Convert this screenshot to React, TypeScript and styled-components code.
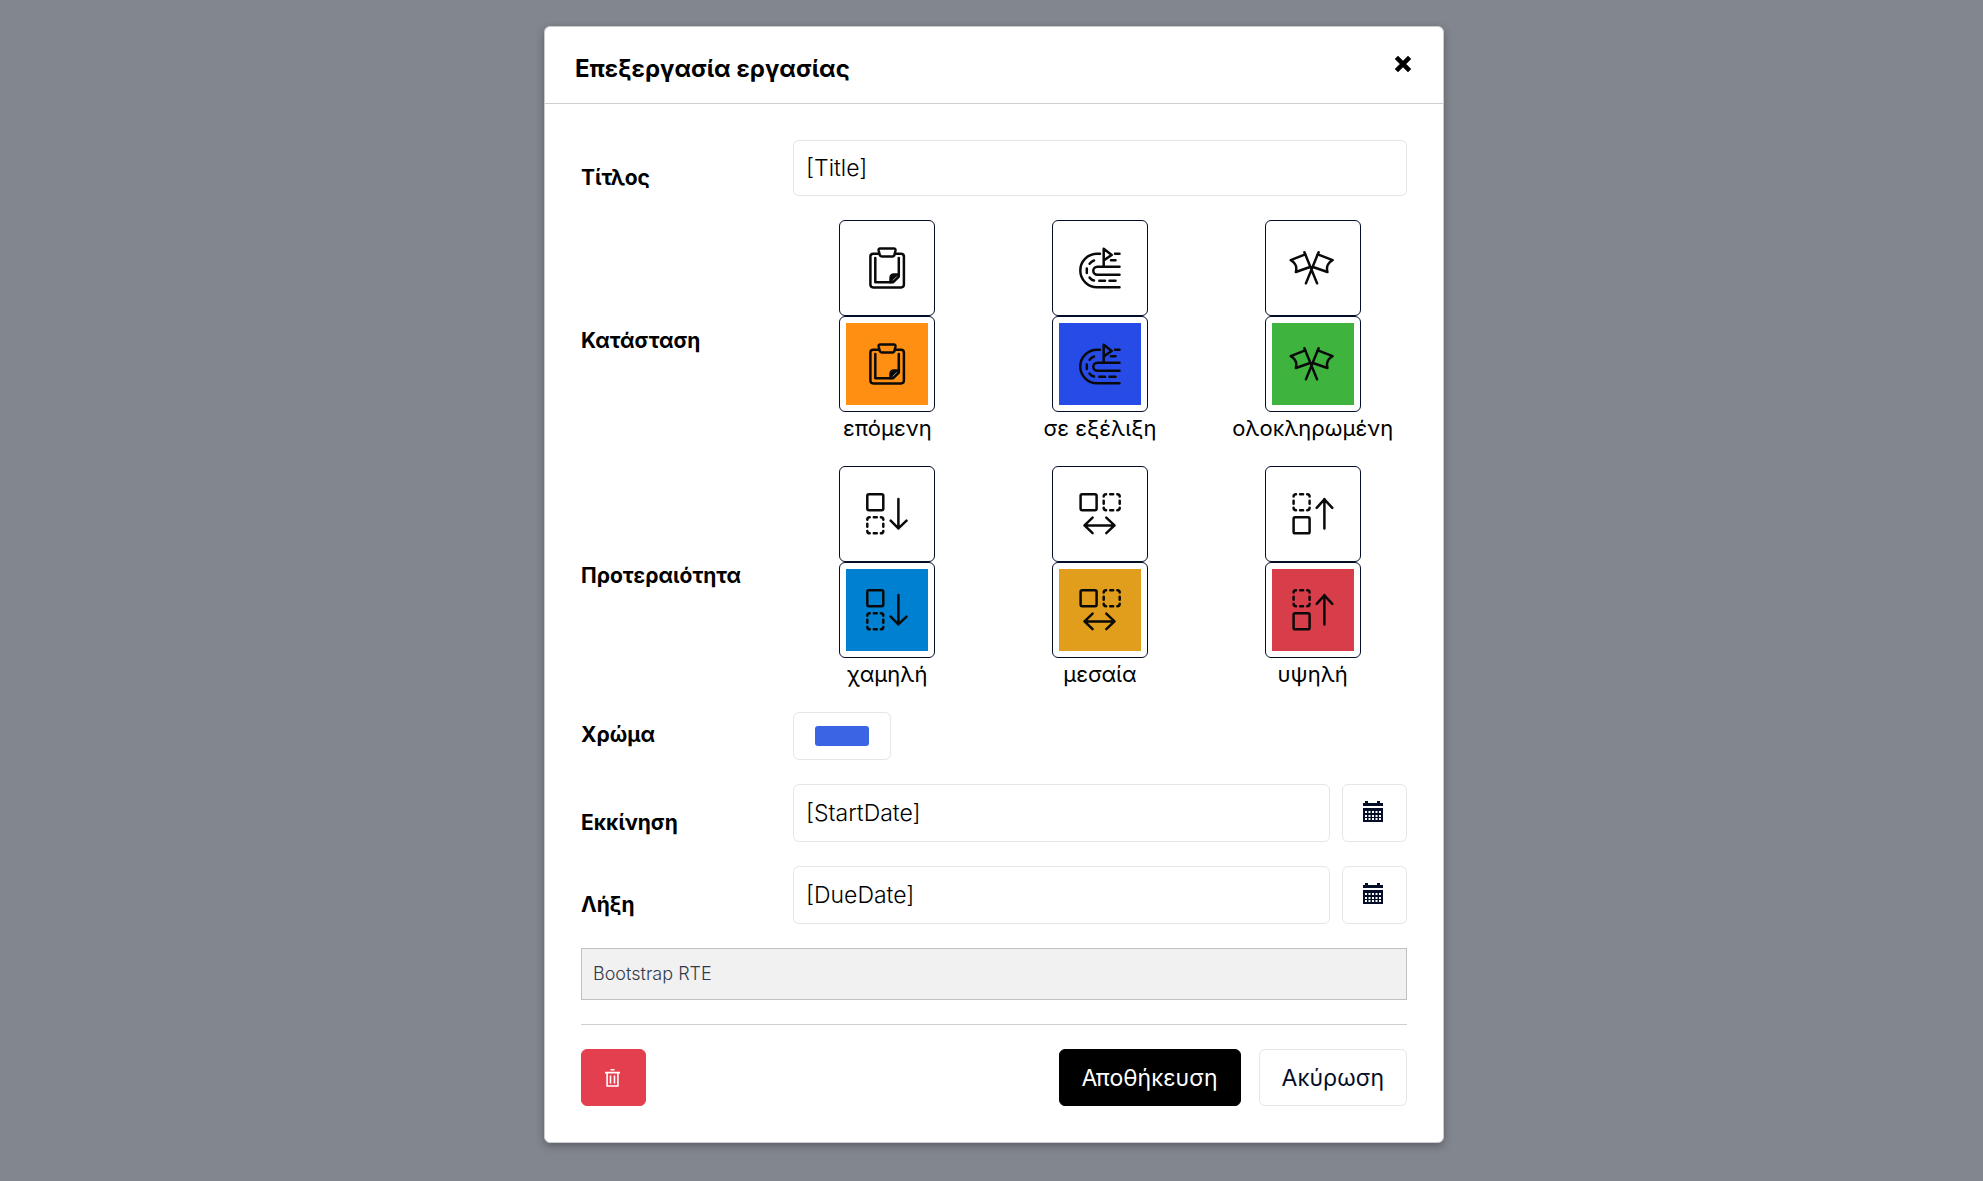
import React, { useState } from "react";
import styled, { createGlobalStyle, css } from "styled-components";

const GlobalStyle = createGlobalStyle`
  *, *::before, *::after { box-sizing: border-box; }
  body {
    margin: 0;
    background: #82868e;
    color: #000;
    font-family: Inter, "Noto Sans", sans-serif;
    font-size: 22px;
    line-height: 30px;
  }
  button, input { font: inherit; color: inherit; }
`;

const Backdrop = styled.div`
  display: flex;
  justify-content: center;
  align-items: flex-start;
  min-height: 100vh;
  padding: 26px 0 38px 5px;
`;

const Dialog = styled.form`
  width: 100%;
  max-width: 900px;
  background: #fff;
  border: 1px solid #c9cbcf;
  border-radius: 6px;
  box-shadow: 0 3px 8px rgba(0, 0, 0, 0.3);
`;

const Header = styled.header`
  display: flex;
  justify-content: space-between;
  align-items: flex-start;
  padding: 20px 23px 18px 30px;
  border-bottom: 1px solid #cdced1;
`;

const Heading = styled.h1`
  margin: 0;
  padding-top: 6px;
  font-size: 24px;
  line-height: 32px;
  font-weight: 700;
`;

const CloseButton = styled.button`
  display: flex;
  padding: 8px;
  border: 0;
  background: none;
  cursor: pointer;
`;

const Body = styled.div`
  display: flex;
  flex-direction: column;
  gap: 24px;
  padding: 36px;
`;

const Row = styled.div`
  display: grid;
  grid-template-columns: 212px 1fr;
  align-items: center;
  margin-right: -12px;
  margin-left: -12px;
`;

const labelText = css<{ $lowered?: boolean }>`
  padding: ${(p) => (p.$lowered ? "20px 12px 0" : "0 12px 2px")};
  font-size: 21px;
  line-height: 30px;
  font-weight: 700;
`;

const FieldLabel = styled.label<{ $lowered?: boolean }>`${labelText}`;
const GroupLabel = styled.span<{ $lowered?: boolean }>`${labelText}`;

const Field = styled.div`
  display: flex;
  gap: 12px;
  min-width: 0;
  padding: 0 12px;
`;

const TextInput = styled.input<{ $tall?: boolean }>`
  flex: 1;
  min-width: 0;
  height: ${(p) => (p.$tall ? "58px" : "56px")};
  padding: 0 12px;
  background: #fff;
  border: 1px solid #e6e6e6;
  border-radius: 6px;
  font-size: 23px;
  font-weight: 300;
`;

const ColorInput = styled.input`
  appearance: none;
  width: 98px;
  height: 48px;
  padding: 13px 21px;
  background: #fff;
  border: 1px solid #e6e6e6;
  border-radius: 6px;
  cursor: pointer;

  &::-webkit-color-swatch-wrapper { padding: 0; }
  &::-webkit-color-swatch { border: 0; border-radius: 3px; }
`;

const variants = {
  outline: css`background: #fff; border-color: #e6e6e6; color: #040e28;`,
  solid: css`background: #000; border-color: #000; color: #fff;`,
  danger: css`background: #e43f4f; border-color: #e43f4f; color: #fff;`,
};

const Button = styled.button<{ $variant: keyof typeof variants; $icon?: boolean }>`
  display: flex;
  align-items: center;
  justify-content: center;
  min-height: 57px;
  padding: 0 ${(p) => (p.$icon ? "20px" : "22px")};
  ${(p) => p.$icon && "width: 65px;"}
  border: 1px solid;
  border-radius: 6px;
  font-size: 23px;
  cursor: pointer;
  ${(p) => variants[p.$variant]}
`;

const Options = styled.div`
  display: grid;
  grid-template-columns: repeat(3, 1fr);
`;

const Option = styled.label`
  position: relative;
  display: flex;
  flex-direction: column;
  align-items: center;
  cursor: pointer;
`;

const HiddenRadio = styled.input`
  position: absolute;
  opacity: 0;
`;

const Tile = styled.span`
  display: block;
  width: 96px;
  height: 96px;
  padding: 6px;
  border: 1px solid #040e28;
  border-radius: 6px;
`;

const TileArt = styled.svg<{ $fill: string }>`
  display: block;
  background: ${(p) => p.$fill};
  fill: none;
  stroke: #0a0a0a;
  stroke-width: 2.5;
  stroke-linecap: round;
  stroke-linejoin: round;
`;

const Caption = styled.span`
  padding-top: 2px;
  line-height: 28px;
`;

const Editor = styled.div`
  padding: 10px 11px;
  background: #f1f1f1;
  border: 1px solid #bfc0c3;
  color: #333b4a;
  font-size: 18px;
  line-height: 30px;
  font-weight: 300;
`;

const Divider = styled.hr`
  width: 100%;
  margin: 0;
  border: 0;
  border-top: 1px solid #cdced1;
`;

const Footer = styled.footer`
  display: flex;
  gap: 18px;
`;

const Spacer = styled.div`
  flex: 1;
`;

const ClipboardIcon = () => (
  <>
    <path d="M32 26.7H27.2Q24.4 26.7 24.4 29.5V57.6Q24.4 60.4 27.2 60.4H55.1Q57.9 60.4 57.9 57.6V29.5Q57.9 26.7 55.1 26.7H50" />
    <path d="M34 21.6H48Q49.6 21.6 49.5 23.2L48.6 27.6Q48.2 29.4 46.6 29.4H35.6Q34 29.4 33.6 27.6L32.6 23.2Q32.4 21.6 34 21.6Z" />
    <path d="M29.3 31V55.3H44.5M52.8 31V47.5" />
    <path d="M44.5 55.3V51Q44.5 47.5 48 47.5H52.8V49.5L47 55.3Z" fill="#0a0a0a" />
    <path d="M47 53.2L50.6 49.6" stroke="#999" strokeWidth="1" />
  </>
);

const TrackIcon = () => (
  <>
    <path d="M41 26.7H38.1A16.8 16.8 0 0 0 38.1 60.3H60.5" />
    <path d="M60.5 39.7H38.3A4 4 0 0 0 38.3 47.7H60.5" />
    <path d="M40.3 53.7H46M50.5 53.7H56.5M30.6 50.6Q32.5 53 35 53.5M27.8 41.5V46M30.6 36.8Q32.5 34.4 35 33.5" />
    <path d="M56 26.7H60.5M52 33.3H56.5" />
    <path d="M44.7 39.5V21.8L52.7 28L44.7 33.4" />
  </>
);

const FlagsIcon = () => (
  <>
    <path d="M32.4 25.2L45.1 56.4M46.6 25.2L33.9 56.4" />
    <path d="M33.2 27.4L18.7 33.2Q22 35 23.2 37.4Q25 40 23.9 45L38 40" />
    <path d="M45.8 27.4L60.6 33.2Q57.3 35 56.1 37.4Q54.3 40 55.4 45L41 40" />
  </>
);

const Square = ({ x, y, dashed }: { x: number; y: number; dashed?: boolean }) =>
  dashed ? (
    <path
      transform={`translate(${x} ${y})`}
      d="M0 2.4Q0 0 2.4 0M6.5 0H9.5M13.6 0Q16 0 16 2.4M16 6.5V9.5M16 13.6Q16 16 13.6 16M9.5 16H6.5M2.4 16Q0 16 0 13.6M0 9.5V6.5"
    />
  ) : (
    <rect x={x} y={y} width="16" height="16" rx="1.6" />
  );

const LowIcon = () => (
  <>
    <Square x={21.3} y={21.2} />
    <Square x={21.3} y={44.3} dashed />
    <path d="M52.4 26V55.4M44.7 47.7L52.4 55.4L60.5 47.7" />
  </>
);

const MediumIcon = () => (
  <>
    <Square x={21.6} y={21.2} />
    <Square x={44.7} y={21.2} dashed />
    <path d="M25.5 52.4H55.5M33.6 44.7L25.5 52.4L33.6 60.2M47.3 44.7L55.5 52.4L47.3 60.2" />
  </>
);

const HighIcon = () => (
  <>
    <Square x={21.6} y={21.2} dashed />
    <Square x={21.6} y={44.3} />
    <path d="M52.4 55.4V26M44.7 34.8L52.4 26.4L60.3 34.8" />
  </>
);

const CalendarIcon = () => (
  <svg width="23" height="24" viewBox="0 0 23 24" aria-hidden="true">
    <g fill="#040e28">
      <path d="M2 0H5V2H14V0H17V2H20V5H0V2H2Z" />
      <path d="M0 7H20V21H0Z" />
    </g>
    <g fill="#fff">
      {[10, 14, 17].map((y) =>
        [2, 5.5, 9, 12.5, 16].map((x) => <rect key={`${x}-${y}`} x={x} y={y} width="2" height="2" />)
      )}
    </g>
  </svg>
);

const TrashIcon = () => (
  <svg width="17" height="20" viewBox="0 0 17 20" fill="none" stroke="#fff" strokeWidth="1.6" aria-hidden="true">
    <path d="M5.5 1.7H9.5M0 4.6H15M2.1 4.6V18H12.9V4.6M5.5 7.5V15.5M9.5 7.5V15.5" />
  </svg>
);

const CloseIcon = () => (
  <svg width="18" height="18" viewBox="0 0 18 18" stroke="#000" strokeWidth="4.6" aria-hidden="true">
    <path d="M2.4 2.4L15.6 15.6M15.6 2.4L2.4 15.6" />
  </svg>
);

type Choice = { value: string; fill: string; Icon: React.ComponentType };

const statuses: Choice[] = [
  { value: "επόμενη", fill: "#ff8f12", Icon: ClipboardIcon },
  { value: "σε εξέλιξη", fill: "#264be6", Icon: TrackIcon },
  { value: "ολοκληρωμένη", fill: "#3eb33e", Icon: FlagsIcon },
];

const priorities: Choice[] = [
  { value: "χαμηλή", fill: "#0080d0", Icon: LowIcon },
  { value: "μεσαία", fill: "#e09e1c", Icon: MediumIcon },
  { value: "υψηλή", fill: "#d83d4a", Icon: HighIcon },
];

function ChoiceRow({ id, label, choices, lowered }: { id: string; label: string; choices: Choice[]; lowered?: boolean }) {
  return (
    <Row role="radiogroup" aria-labelledby={id}>
      <GroupLabel id={id} $lowered={lowered}>{label}</GroupLabel>
      <Options>
        {choices.map(({ value, fill, Icon }) => (
          <Option key={value}>
            <HiddenRadio type="radio" name={id} value={value} />
            {["#fff", fill].map((background) => (
              <Tile key={background}>
                <TileArt width="82" height="82" viewBox="0 0 82 82" $fill={background} aria-hidden="true">
                  <Icon />
                </TileArt>
              </Tile>
            ))}
            <Caption>{value}</Caption>
          </Option>
        ))}
      </Options>
    </Row>
  );
}

function DateRow({ id, label, initial }: { id: string; label: string; initial: string }) {
  const [value, setValue] = useState(initial);
  return (
    <Row>
      <FieldLabel htmlFor={id} $lowered>{label}</FieldLabel>
      <Field>
        <TextInput id={id} $tall value={value} onChange={(e) => setValue(e.target.value)} />
        <Button type="button" $variant="outline" $icon aria-label={label}>
          <CalendarIcon />
        </Button>
      </Field>
    </Row>
  );
}

export default function App() {
  const [title, setTitle] = useState("[Title]");
  const [color, setColor] = useState("#3b64e4");

  return (
    <>
      <GlobalStyle />
      <Backdrop>
        <Dialog role="dialog" aria-labelledby="heading" onSubmit={(e) => e.preventDefault()}>
          <Header>
            <Heading id="heading">Επεξεργασία εργασίας</Heading>
            <CloseButton type="button" aria-label="Ακύρωση">
              <CloseIcon />
            </CloseButton>
          </Header>
          <Body>
            <Row>
              <FieldLabel htmlFor="title" $lowered>Τίτλος</FieldLabel>
              <Field>
                <TextInput id="title" value={title} onChange={(e) => setTitle(e.target.value)} />
              </Field>
            </Row>
            <ChoiceRow id="status" label="Κατάσταση" choices={statuses} lowered />
            <ChoiceRow id="priority" label="Προτεραιότητα" choices={priorities} />
            <Row>
              <FieldLabel htmlFor="color">Χρώμα</FieldLabel>
              <Field>
                <ColorInput id="color" type="color" value={color} onChange={(e) => setColor(e.target.value)} />
              </Field>
            </Row>
            <DateRow id="start" label="Εκκίνηση" initial="[StartDate]" />
            <DateRow id="due" label="Λήξη" initial="[DueDate]" />
            <Editor>Bootstrap RTE</Editor>
            <Divider />
            <Footer>
              <Button type="button" $variant="danger" $icon aria-label="Διαγραφή">
                <TrashIcon />
              </Button>
              <Spacer />
              <Button type="submit" $variant="solid">Αποθήκευση</Button>
              <Button type="button" $variant="outline">Ακύρωση</Button>
            </Footer>
          </Body>
        </Dialog>
      </Backdrop>
    </>
  );
}
